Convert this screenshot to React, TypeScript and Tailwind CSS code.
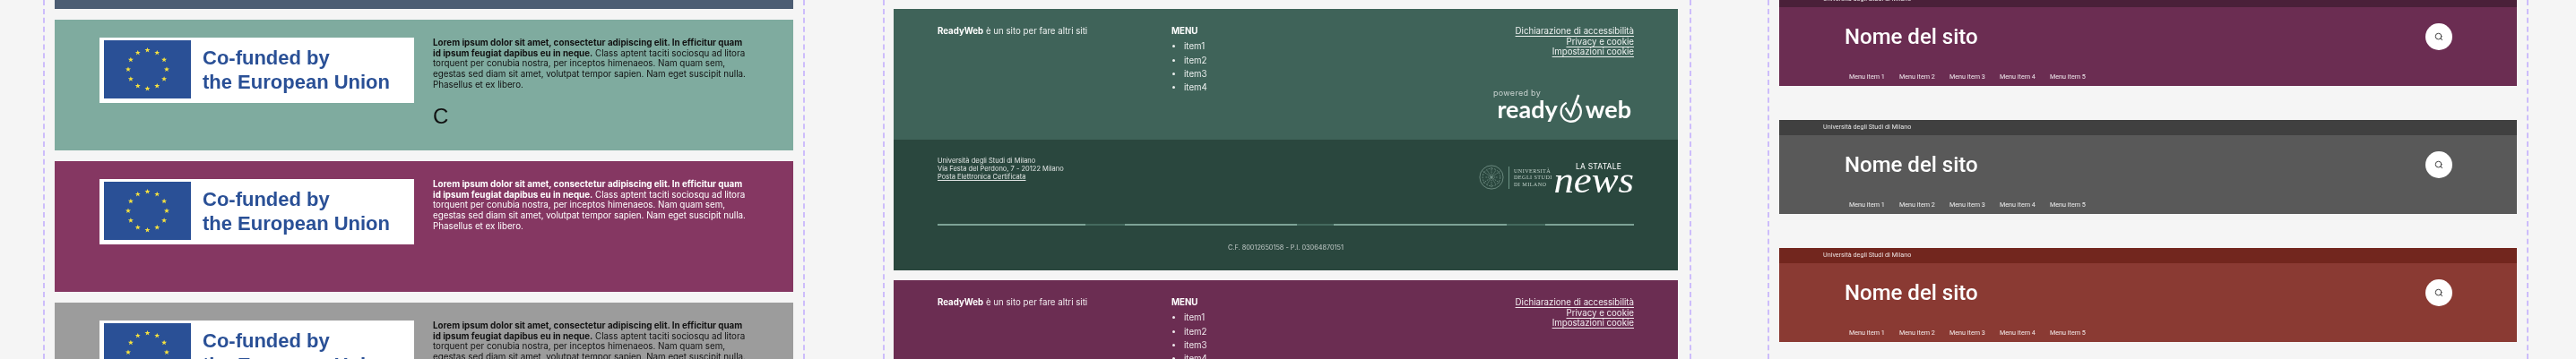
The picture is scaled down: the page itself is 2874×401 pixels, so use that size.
import React from "react";
import { Search } from "lucide-react";

const lorem = "Class aptent taciti sociosqu ad litora torquent per conubia nostra, per inceptos himenaeos. Nam quam sem, egestas sed diam sit amet, volutpat tempor sapien. Nam eget suscipit nulla. Phasellus et ex libero.";

function EuFlag() {
  const stars = Array.from({ length: 12 }, (_, i) => {
    const a = (i * Math.PI) / 6;
    return { x: 48.5 + 21.5 * Math.sin(a), y: 32.5 - 21.5 * Math.cos(a) };
  });
  return (
    <svg viewBox="0 0 97 65" className="h-[65px] w-[97px] shrink-0">
      <rect width="97" height="65" fill="#2a5096" />
      {stars.map((s, i) => (
        <polygon
          key={i}
          transform={`translate(${s.x} ${s.y})`}
          fill="#f7e23e"
          points="0,-3 0.8,-1 3,-1 1.2,0.4 1.9,2.5 0,1.2 -1.9,2.5 -1.2,0.4 -3,-1 -0.8,-1"
        />
      ))}
    </svg>
  );
}

function EuCard({ bg, text, extra }: { bg: string; text: string; extra?: boolean }) {
  return (
    <div className={`flex h-[146px] shrink-0 pl-[50px] pt-[20px] ${bg}`}>
      <div className="flex h-[73px] w-[351px] shrink-0 items-start bg-white pl-[5px] pt-[3px]">
        <EuFlag />
        <div className="ml-[13px] mt-[6px] font-['Liberation_Sans',sans-serif] text-[22px] font-bold leading-[27px] text-[#2a5096]">
          <div>Co-funded by</div>
          <div>the European Union</div>
        </div>
      </div>
      <div className={`ml-[21px] w-[350px] font-['Inter',sans-serif] text-[9.8px] leading-[11.7px] ${text}`}>
        <p>
          <b className="font-bold">Lorem ipsum dolor sit amet, consectetur adipiscing elit. In efficitur quam id ipsum feugiat dapibus eu in neque.</b>{" "}
          {lorem}
        </p>
        {extra && <p className="mt-[15px] font-['Liberation_Sans',sans-serif] text-[24px] leading-[28px] text-[#111]">C</p>}
      </div>
    </div>
  );
}

function FooterTop({ bg }: { bg: string }) {
  return (
    <div className={`flex h-[146px] shrink-0 justify-between px-[49px] pt-[19px] font-['Inter',sans-serif] text-[9.7px] leading-[11.7px] text-white/90 ${bg}`}>
      <div className="flex">
        <p className="w-[261px]">
          <b className="font-bold text-white">ReadyWeb</b> è un sito per fare altri siti
        </p>
        <div>
          <p className="font-bold text-white">MENU</p>
          <ul className="mt-[5.5px] list-disc pl-[14px]">
            <li className="mb-[3.6px]">item1</li>
            <li className="mb-[3.6px]">item2</li>
            <li className="mb-[3.6px]">item3</li>
            <li className="mb-[3.6px]">item4</li>
          </ul>
        </div>
      </div>
      <div className="flex flex-col items-end">
        <a className="underline underline-offset-2">Dichiarazione di accessibilità</a>
        <a className="underline underline-offset-2">Privacy e cookie</a>
        <a className="underline underline-offset-2">Impostazioni cookie</a>
        <div className="mr-[3px] mt-[35px] w-[154px]">
          <p className="text-[9px] leading-[9px] tracking-[0.3px] text-white/70">powered by</p>
          <div className="-mt-[3px] flex items-center justify-end text-white">
            <span className="font-['Lato',sans-serif] text-[27px] font-bold leading-[27px]">ready</span>
            <svg viewBox="0 0 30 34" className="mx-[1px] h-[33px] w-[29px]" fill="none" stroke="currentColor" strokeWidth="2.4">
              <path d="M21 11a11.5 11.5 0 1 1-12-1" />
              <path d="M8 16l6 9 9-24" strokeWidth="2.6" />
            </svg>
            <span className="font-['Lato',sans-serif] text-[27px] font-bold leading-[27px]">web</span>
          </div>
        </div>
      </div>
    </div>
  );
}

function Seal() {
  return (
    <svg viewBox="0 0 30 30" className="h-[30px] w-[28px] text-[#8cab9f]" fill="none" stroke="currentColor" strokeWidth="0.7">
      <circle cx="15" cy="15" r="14" />
      <circle cx="15" cy="15" r="10.5" strokeDasharray="2 1.5" />
      <path d="M15 3v24M5 8l20 14M25 8L5 22M8 15h14M10 7l10 16M20 7L10 23" strokeDasharray="1.5 1" />
    </svg>
  );
}

function FooterBottom({ bg }: { bg: string }) {
  return (
    <div className={`flex h-[146px] shrink-0 flex-col px-[49px] pt-[19px] font-['Inter',sans-serif] text-white/85 ${bg}`}>
      <div className="flex h-[73px] justify-between">
        <div className="text-[7.5px] leading-[9px]">
          <p>Università degli Studi di Milano</p>
          <p>Via Festa del Perdono, 7 - 20122 Milano</p>
          <a className="underline underline-offset-1">Posta Elettronica Certificata</a>
        </div>
        <div className="flex items-start">
          <div className="mt-[8px] flex items-center">
            <Seal />
            <div className="mx-[5px] h-[25px] w-px bg-[#6f9587]" />
            <div className="w-[52px] font-['Liberation_Serif',serif] text-[6.2px] leading-[7.5px] tracking-[0.4px] text-[#c0d0c9]">
              <p>UNIVERSITÀ</p>
              <p>DEGLI STUDI</p>
              <p>DI MILANO</p>
            </div>
          </div>
          <div className="-ml-[3px] mt-[6px] flex w-[85px] flex-col items-end text-white">
            <p className="mr-[14px] font-['Inter',sans-serif] text-[8.5px] leading-[10px] tracking-[0.2px]">LA STATALE</p>
            <p className="-mt-[6px] origin-right scale-x-[1.12] font-['Liberation_Serif',serif] text-[40px] italic leading-[34px]">news</p>
          </div>
        </div>
      </div>
      <div className="mt-[2px] flex h-[2px] w-full">
        <div className="w-[165px] bg-[#7da396]" />
        <div className="w-[44px] bg-[#446a5e]" />
        <div className="w-[192px] bg-[#7da396]" />
        <div className="w-[41px] bg-[#446a5e]" />
        <div className="w-[193px] bg-[#7da396]" />
        <div className="w-[43px] bg-[#446a5e]" />
        <div className="w-[99px] bg-[#7da396]" />
      </div>
      <p className="mt-[20px] text-center text-[7.3px] leading-[9px] text-white/70">C.F. 80012650158 - P.I. 03064870151</p>
    </div>
  );
}

function SiteHeader({ band, bg }: { band: string; bg: string }) {
  return (
    <div className={`flex h-[104.5px] shrink-0 flex-col font-['Roboto',sans-serif] text-white ${bg}`}>
      <div className={`flex h-[17px] shrink-0 items-center pl-[49px] text-[7.2px] text-white/85 ${band}`}>Università degli Studi di Milano</div>
      <div className="flex items-center justify-between pl-[73px] pr-[72px] pt-[18px]">
        <p className="text-[24px] font-medium leading-[30px]">Nome del sito</p>
        <div className="flex h-[30px] w-[30px] items-center justify-center rounded-full bg-white text-[#444]">
          <Search size={10} strokeWidth={2.4} />
        </div>
      </div>
      <div className="mt-[25px] flex gap-[16px] pl-[78px] text-[7.2px] leading-[9px] text-white/90">
        <span className="w-[40px] whitespace-nowrap">Menu item 1</span>
        <span className="w-[40px] whitespace-nowrap">Menu item 2</span>
        <span className="w-[40px] whitespace-nowrap">Menu item 3</span>
        <span className="w-[40px] whitespace-nowrap">Menu item 4</span>
        <span className="w-[40px] whitespace-nowrap">Menu item 5</span>
      </div>
    </div>
  );
}

export default function App() {
  return (
    <div className="flex h-[401px] w-[2874px] items-start overflow-hidden bg-[#f5f5f5] pl-[48px] blur-[0.6px]">
      <div className="flex h-[401px] w-[850px] shrink-0 flex-col gap-[12px] overflow-hidden border-x-2 border-dashed border-[#cdbdfb] px-[11px]">
        <div className="h-[10px] shrink-0 bg-[#4c5d73]" />
        <EuCard bg="bg-[#7fab9f]" text="text-[#111]" extra />
        <EuCard bg="bg-[#853762]" text="text-white" />
        <EuCard bg="bg-[#9c9c9c]" text="text-[#111]" />
      </div>
      <div className="ml-[87px] flex h-[401px] w-[902px] shrink-0 flex-col overflow-hidden border-x-2 border-dashed border-[#cdbdfb] pl-[10px] pr-[13px] pt-[10px]">
        <FooterTop bg="bg-[#3f6359]" />
        <FooterBottom bg="bg-[#2a473e]" />
        <div className="mt-[11px]">
          <FooterTop bg="bg-[#6b2d52]" />
        </div>
      </div>
      <div className="ml-[85px] flex h-[401px] w-[849px] shrink-0 flex-col overflow-hidden border-x-2 border-dashed border-[#cdbdfb] px-[11px]">
        <div className="-mt-[9px] flex flex-col gap-[38.5px]">
          <SiteHeader band="bg-[#4a2039]" bg="bg-[#6b2d52]" />
          <SiteHeader band="bg-[#404040]" bg="bg-[#595959]" />
          <SiteHeader band="bg-[#72261e]" bg="bg-[#8a3a33]" />
        </div>
      </div>
    </div>
  );
}
